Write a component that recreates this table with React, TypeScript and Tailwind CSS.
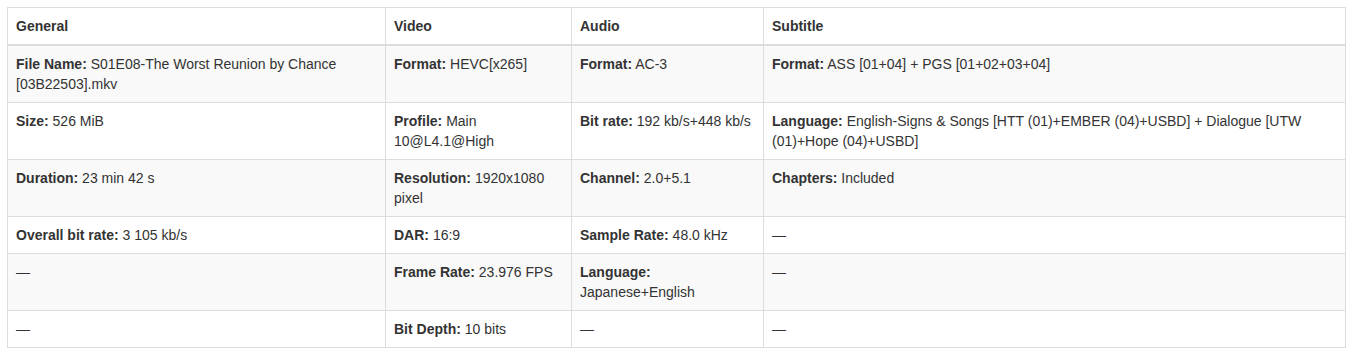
import React from "react";

type Cell = { label?: string; value?: string } | null;

const rows: Cell[][] = [
  [
    { label: "File Name:", value: "S01E08-The Worst Reunion by Chance [03B22503].mkv" },
    { label: "Format:", value: "HEVC[x265]" },
    { label: "Format:", value: "AC-3" },
    { label: "Format:", value: "ASS [01+04] + PGS [01+02+03+04]" },
  ],
  [
    { label: "Size:", value: "526 MiB" },
    { label: "Profile:", value: "Main 10@L4.1@High" },
    { label: "Bit rate:", value: "192 kb/s+448 kb/s" },
    {
      label: "Language:",
      value: "English-Signs & Songs [HTT (01)+EMBER (04)+USBD] + Dialogue [UTW (01)+Hope (04)+USBD]",
    },
  ],
  [
    { label: "Duration:", value: "23 min 42 s" },
    { label: "Resolution:", value: "1920x1080 pixel" },
    { label: "Channel:", value: "2.0+5.1" },
    { label: "Chapters:", value: "Included" },
  ],
  [
    { label: "Overall bit rate:", value: "3 105 kb/s" },
    { label: "DAR:", value: "16:9" },
    { label: "Sample Rate:", value: "48.0 kHz" },
    null,
  ],
  [
    null,
    { label: "Frame Rate:", value: "23.976 FPS" },
    { label: "Language:", value: "Japanese+English" },
    null,
  ],
  [null, { label: "Bit Depth:", value: "10 bits" }, null, null],
];

const headers = ["General", "Video", "Audio", "Subtitle"];
const widths = ["w-[378px]", "w-[186px]", "w-[192px]", "w-[582px]"];

export default function App() {
  return (
    <div className="bg-white p-[7px] font-['Liberation_Sans',Arial,sans-serif] text-[14px] leading-[20px] text-[#333]">
      <table className="w-[1338px] table-fixed border-collapse border border-[#ddd]">
        <colgroup>
          {widths.map((w, i) => (
            <col key={i} className={w} />
          ))}
        </colgroup>
        <thead>
          <tr>
            {headers.map((h) => (
              <th
                key={h}
                className="border border-b-2 border-[#ddd] p-2 text-left align-bottom font-bold"
              >
                {h}
              </th>
            ))}
          </tr>
        </thead>
        <tbody>
          {rows.map((row, r) => (
            <tr key={r} className={r % 2 === 0 ? "bg-[#f9f9f9]" : "bg-white"}>
              {row.map((cell, c) => (
                <td key={c} className="border border-[#ddd] p-2 align-top">
                  {cell ? (
                    <>
                      <strong className="font-bold">{cell.label}</strong> {cell.value}
                    </>
                  ) : (
                    "—"
                  )}
                </td>
              ))}
            </tr>
          ))}
        </tbody>
      </table>
    </div>
  );
}
